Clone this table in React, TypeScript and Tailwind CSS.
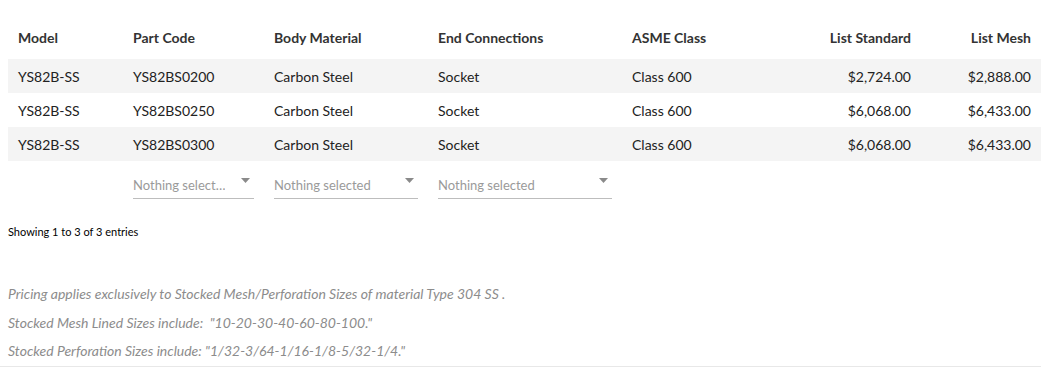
import React from "react";

const cols = "grid grid-cols-[115px_141px_164px_194px_158px_141px_120px]";

const rows = [
  ["YS82B-SS", "YS82BS0200", "Carbon Steel", "Socket", "Class 600", "$2,724.00", "$2,888.00"],
  ["YS82B-SS", "YS82BS0250", "Carbon Steel", "Socket", "Class 600", "$6,068.00", "$6,433.00"],
  ["YS82B-SS", "YS82BS0300", "Carbon Steel", "Socket", "Class 600", "$6,068.00", "$6,433.00"],
];

const headers = ["Model", "Part Code", "Body Material", "End Connections", "ASME Class", "List Standard", "List Mesh"];

function Select({ label }: { label: string }) {
  return (
    <div className="flex items-center justify-between h-[28px] border-b border-[#bdbdbd] text-[#9a9a9a] text-[13px] pr-[4px]">
      <span className="truncate pt-[3px]">{label}</span>
      <svg width="9" height="5" viewBox="0 0 9 5" className="shrink-0 -mt-[8px]">
        <polygon points="0,0 9,0 4.5,5" fill="#8a8a8a" />
      </svg>
    </div>
  );
}

export default function App() {
  return (
    <div className="bg-white w-[1041px] h-[375px] text-[14px] text-[#222]" style={{ fontFamily: "Lato, 'Open Sans', sans-serif" }}>
      <div className="ml-[8px] w-[1033px]">
        <div className={`${cols} font-bold text-[#333] pt-[28px] pb-[11px] leading-[20px]`}>
          {headers.map((h, i) => (
            <div key={h} className={`px-[10px] ${i >= 5 ? "text-right" : ""}`}>{h}</div>
          ))}
        </div>
        {rows.map((r, ri) => (
          <div key={ri} className={`${cols} h-[34px] items-center ${ri % 2 === 0 ? "bg-[#f4f4f4]" : "bg-white"}`}>
            {r.map((c, i) => (
              <div key={i} className={`px-[10px] ${i >= 5 ? "text-right" : ""}`}>{c}</div>
            ))}
          </div>
        ))}
        <div className={`${cols} pt-[10px]`}>
          <div />
          <div className="px-[10px]"><Select label="Nothing select…" /></div>
          <div className="px-[10px]"><Select label="Nothing selected" /></div>
          <div className="px-[10px]"><Select label="Nothing selected" /></div>
        </div>
      </div>
      <div className="ml-[8px] mt-[26px] text-[11px] text-black leading-[14px]">Showing 1 to 3 of 3 entries</div>
      <div className="ml-[8px] mt-[41px] italic text-[#8c8c8c] leading-[28.5px] text-[14px]">
        <div>Pricing applies exclusively to Stocked Mesh/Perforation Sizes of material Type 304 SS .</div>
        <div>Stocked Mesh Lined Sizes include:&nbsp; "10-20-30-40-60-80-100."</div>
        <div>Stocked Perforation Sizes include: "1/32-3/64-1/16-1/8-5/32-1/4."</div>
      </div>
      <div className="border-t border-[#e8e8e8]" />
    </div>
  );
}
